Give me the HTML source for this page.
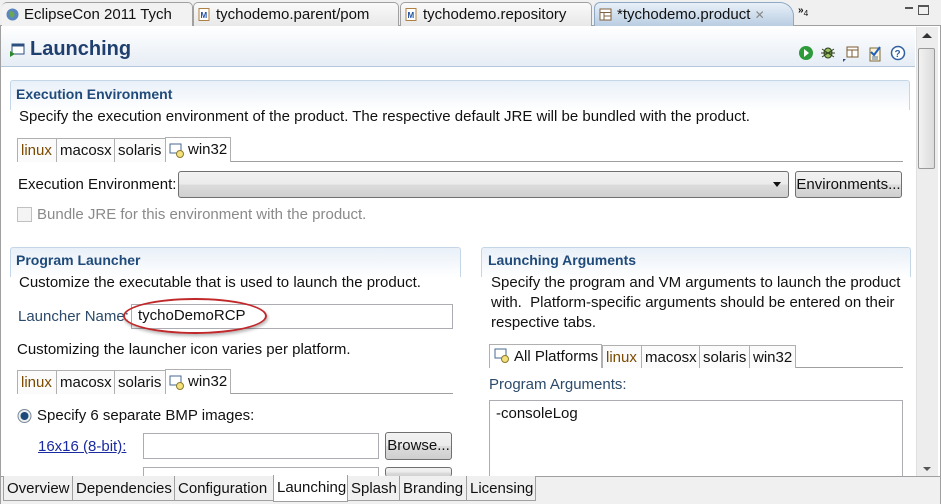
<!DOCTYPE html>
<html><head><meta charset="utf-8"><style>
*{margin:0;padding:0;box-sizing:border-box}
body{width:941px;height:504px;overflow:hidden;background:#fff;font-family:"Liberation Sans",sans-serif;font-size:15px;color:#111;position:relative}
.a{position:absolute;white-space:nowrap;line-height:18px;font-size:15px}
.box{position:absolute}
.tab{position:absolute;top:2px;height:24px;border:1px solid #a0a0a0;border-bottom:none;border-radius:5px 5px 0 0;background:linear-gradient(#fafafa,#e8e8e8);padding:3px 6px 0 22px;white-space:nowrap;font-size:15px;overflow:hidden}
.ic{position:absolute;left:4px;top:5px;width:13px;height:13px}
.sec{position:absolute;border:1px solid #c5d6e6;border-bottom:none;border-radius:3px 3px 0 0;background:linear-gradient(#e9f0f8,#fff 30px)}
.st{position:absolute;font-weight:bold;color:#1f4a7a;font-size:14px;line-height:18px}
.t2{position:absolute;height:24px;border:1px solid #b0b0b0;border-bottom:none;background:#fff;padding:3px 0 0 3px;font-size:15px;line-height:18px;white-space:nowrap;overflow:hidden}
.t2.in{background:#fbfbfb}
.btn{position:absolute;border:1px solid #707070;border-radius:3px;background:linear-gradient(#f2f2f2,#ebebeb 50%,#dcdcdc 51%,#cfcfcf);text-align:center;font-size:15px;line-height:25px;white-space:nowrap}
.inp{position:absolute;border:1px solid #abadb3;background:#fff}
.bt{position:absolute;top:476px;height:25px;border:1px solid #a0a0a0;border-top:none;background:#f0f0f0;padding:4px 0 0 3px;font-size:15px;line-height:18px;white-space:nowrap;overflow:hidden}
</style></head><body>
<div class="box" style="left:0;top:0;width:941px;height:26px;background:#f0f0f0;border-bottom:1px solid #a0a0a0"></div>
<div class="tab" style="left:2px;width:191px;border-left:none;background:#f2f2f2"><svg class="ic" viewBox="0 0 13 13"><circle cx="6.5" cy="6.5" r="6" fill="#5a86c0"/><path d="M3 4 Q6 2 8 5 T5 10" fill="#6aa84f"/></svg>EclipseCon 2011 Tych</div>
<div class="tab" style="left:193px;width:206px"><svg class="ic" viewBox="0 0 13 13"><rect x="1" y="0.5" width="10" height="12" fill="#fff" stroke="#b08040"/><text x="2.5" y="10" font-size="8" font-weight="bold" fill="#2050a0" font-family="Liberation Sans">M</text></svg>tychodemo.parent/pom</div>
<div class="tab" style="left:400px;width:192px"><svg class="ic" viewBox="0 0 13 13"><rect x="1" y="0.5" width="10" height="12" fill="#fff" stroke="#b08040"/><text x="2.5" y="10" font-size="8" font-weight="bold" fill="#2050a0" font-family="Liberation Sans">M</text></svg>tychodemo.repository</div>
<div class="tab" style="left:594px;width:200px;background:linear-gradient(#e8f0f8,#b9cde2);border-color:#8fa8c4;border-radius:6px 14px 0 0"><svg class="ic" viewBox="0 0 13 13"><rect x="1" y="1" width="11" height="11" fill="#fff" stroke="#806040"/><path d="M1 4.5H12M5 4.5V12M5 8H12" stroke="#806040"/></svg>*tychodemo.product <span style="color:#888;font-size:12px">✕</span></div>
<div class="a" style="left:798px;top:2px;font-size:10px;font-weight:bold">»<sub style="font-weight:normal">4</sub></div>
<div class="box" style="left:905px;top:7px;width:8px;height:2px;border:1px solid #555"></div>
<div class="box" style="left:918px;top:5px;width:11px;height:10px;border:1px solid #555;border-top-width:2px"></div>
<div class="box" style="left:0;top:26px;width:941px;height:478px;border:1px solid #a0a0a0;border-top:none"></div>
<div class="box" style="left:1px;top:26px;width:914px;height:41px;background:linear-gradient(#fff,#e6edf5);border-bottom:1px solid #b5c8dc"></div>
<svg class="box" style="left:9px;top:42px" width="16" height="16" viewBox="0 0 16 16"><rect x="3" y="2" width="12" height="10" fill="#fff" stroke="#2c4f80"/><rect x="3" y="2" width="12" height="2.5" fill="#2c4f80"/><path d="M1 9L6 12 1 15Z" fill="#2a8a2a"/></svg>
<div class="a" style="left:30px;top:37px;font-size:20px;line-height:24px;font-weight:bold;color:#1f3f6f">Launching</div>
<svg class="box" style="left:797px;top:44px" width="110" height="18" viewBox="0 0 110 18">
<circle cx="9" cy="9" r="7" fill="#2e9a3a"/><path d="M7 5L12 9 7 13Z" fill="#fff"/>
<ellipse cx="31" cy="9" rx="4" ry="5" fill="#9ac060" stroke="#304020"/><path d="M25 5L37 13M25 13L37 5M24 9H38" stroke="#304020"/>
<rect x="50" y="3" width="11" height="10" fill="#fff" stroke="#7a5a30"/><path d="M50 6H61M55 6V13" stroke="#7a5a30"/><path d="M46 15L49 15 46 18Z" fill="#2c4f80"/>
<rect x="73" y="4" width="10" height="13" fill="#fff4d8" stroke="#7a6a40"/><path d="M74 8L77 11 83 3" stroke="#1f5fbf" stroke-width="2" fill="none"/><path d="M75 13H81M75 15H81" stroke="#5a7aa0"/>
<circle cx="101" cy="9" r="6.5" fill="#fff" stroke="#3060a0" stroke-width="1.5"/><text x="97.5" y="13" font-size="10" font-weight="bold" fill="#3060a0" font-family="Liberation Sans">?</text>
</svg>
<div class="box" style="left:916px;top:27px;width:22px;height:449px;background:#ededed;border-left:1px solid #e0e0e0"></div>
<div class="box" style="left:922px;top:33px;width:0;height:0;border:5px solid transparent;border-bottom-color:#333;border-top:none"></div>
<div class="box" style="left:918px;top:48px;width:17px;height:121px;border:1px solid #9a9a9a;border-radius:2px;background:linear-gradient(90deg,#f2f2f2,#dcdcdc)"></div>
<div class="box" style="left:923px;top:467px;width:0;height:0;border:4px solid transparent;border-top-color:#555;border-bottom:none"></div>
<div class="sec" style="left:10px;top:80px;width:900px;height:30px"></div>
<div class="st" style="left:16px;top:85px">Execution Environment</div>
<div class="a" style="left:19px;top:108px">Specify the execution environment of the product. The respective default JRE will be bundled with the product.</div>
<div class="box" style="left:17px;top:161px;width:886px;border-top:1px solid #a0a0a0"></div>
<div class="t2 in" style="left:17px;top:138px;width:40px;color:#7a4a00">linux</div>
<div class="t2 in" style="left:56px;top:138px;width:59px">macosx</div>
<div class="t2 in" style="left:114px;top:138px;width:52px">solaris</div>
<div class="t2" style="left:165px;top:137px;width:66px;height:25px;padding-left:22px">win32</div>
<svg class="box" style="left:169px;top:143px" width="16" height="15"><rect x="1" y="1" width="11" height="9" fill="#fff" stroke="#4a6a90"/><circle cx="11" cy="11" r="3.5" fill="#f4e07a" stroke="#8a7a30"/></svg>
<div class="a" style="left:18px;top:176px">Execution Environment:</div>
<div class="box" style="left:178px;top:171px;width:611px;height:27px;border:1px solid #707070;border-radius:3px;background:linear-gradient(#f2f2f2,#ebebeb 50%,#dcdcdc 51%,#d0d0d0)"></div>
<div class="box" style="left:773px;top:182px;border:4px solid transparent;border-top:5px solid #111;border-bottom:none"></div>
<div class="btn" style="left:795px;top:171px;width:107px;height:27px">Environments...</div>
<div class="box" style="left:17px;top:207px;width:15px;height:15px;border:1px solid #c0c0c0;background:#f4f4f4"></div>
<div class="a" style="left:37px;top:206px;color:#8a8a8a">Bundle JRE for this environment with the product.</div>
<div class="sec" style="left:10px;top:247px;width:451px;height:30px"></div>
<div class="st" style="left:16px;top:251px">Program Launcher</div>
<div class="a" style="left:19px;top:274px">Customize the executable that is used to launch the product.</div>
<div class="a" style="left:18px;top:308px;color:#2c4a6a">Launcher Name:</div>
<div class="inp" style="left:131px;top:304px;width:322px;height:25px"></div>
<div class="a" style="left:138px;top:307px">tychoDemoRCP</div>
<div class="box" style="left:123px;top:298px;width:144px;height:36px;border:2px solid #c0282a;border-radius:50%;box-shadow:1px 2px 3px rgba(0,0,0,.3)"></div>
<div class="a" style="left:17px;top:341px">Customizing the launcher icon varies per platform.</div>
<div class="box" style="left:17px;top:393px;width:436px;border-top:1px solid #a0a0a0"></div>
<div class="t2 in" style="left:17px;top:370px;width:40px;color:#7a4a00">linux</div>
<div class="t2 in" style="left:56px;top:370px;width:59px">macosx</div>
<div class="t2 in" style="left:114px;top:370px;width:52px">solaris</div>
<div class="t2" style="left:165px;top:369px;width:66px;height:25px;padding-left:22px">win32</div>
<svg class="box" style="left:169px;top:375px" width="16" height="15"><rect x="1" y="1" width="11" height="9" fill="#fff" stroke="#4a6a90"/><circle cx="11" cy="11" r="3.5" fill="#f4e07a" stroke="#8a7a30"/></svg>
<svg class="box" style="left:17px;top:408px" width="16" height="16"><circle cx="7.5" cy="8" r="6.5" fill="#eee" stroke="#7a8a9a"/><circle cx="7.5" cy="8" r="4" fill="#1a4a7a"/></svg>
<div class="a" style="left:37px;top:407px">Specify 6 separate BMP images:</div>
<div class="a" style="left:38px;top:438px;color:#1a2aa0;text-decoration:underline">16x16 (8-bit):</div>
<div class="inp" style="left:143px;top:433px;width:236px;height:26px"></div>
<div class="btn" style="left:385px;top:432px;width:67px;height:28px">Browse...</div>
<div class="inp" style="left:143px;top:467px;width:236px;height:10px"></div>
<div class="btn" style="left:385px;top:467px;width:67px;height:10px;border-bottom:none"></div>
<div class="sec" style="left:481px;top:247px;width:430px;height:30px"></div>
<div class="st" style="left:488px;top:251px">Launching Arguments</div>
<div class="a" style="left:491px;top:274px">Specify the program and VM arguments to launch the product</div>
<div class="a" style="left:491px;top:294px">with.&nbsp; Platform-specific arguments should be entered on their</div>
<div class="a" style="left:491px;top:314px">respective tabs.</div>
<div class="box" style="left:489px;top:367px;width:414px;border-top:1px solid #a0a0a0"></div>
<div class="t2" style="left:489px;top:344px;width:113px;height:24px;padding-left:24px">All Platforms</div>
<svg class="box" style="left:494px;top:348px" width="16" height="15"><rect x="1" y="1" width="11" height="9" fill="#fff" stroke="#4a6a90"/><circle cx="11" cy="11" r="3.5" fill="#f4e07a" stroke="#8a7a30"/></svg>
<div class="t2 in" style="left:602px;top:345px;width:40px;color:#7a4a00;height:23px">linux</div>
<div class="t2 in" style="left:641px;top:345px;width:59px;height:23px">macosx</div>
<div class="t2 in" style="left:699px;top:345px;width:51px;height:23px">solaris</div>
<div class="t2 in" style="left:749px;top:345px;width:47px;height:23px">win32</div>
<div class="a" style="left:489px;top:376px;color:#2c4a6a">Program Arguments:</div>
<div class="inp" style="left:489px;top:400px;width:414px;height:80px;border-bottom:none"></div>
<div class="a" style="left:496px;top:405px">-consoleLog</div>
<div class="box" style="left:1px;top:476px;width:939px;height:28px;background:#f0f0f0;border-top:1px solid #a0a0a0"></div>
<div class="bt" style="left:3px;width:70px">Overview</div>
<div class="bt" style="left:72px;width:103px">Dependencies</div>
<div class="bt" style="left:174px;width:100px">Configuration</div>
<div class="bt" style="left:273px;width:75px;background:#fff;top:475px;height:27px">Launching</div>
<div class="bt" style="left:347px;width:53px">Splash</div>
<div class="bt" style="left:399px;width:68px">Branding</div>
<div class="bt" style="left:466px;width:70px">Licensing</div>
</body></html>
